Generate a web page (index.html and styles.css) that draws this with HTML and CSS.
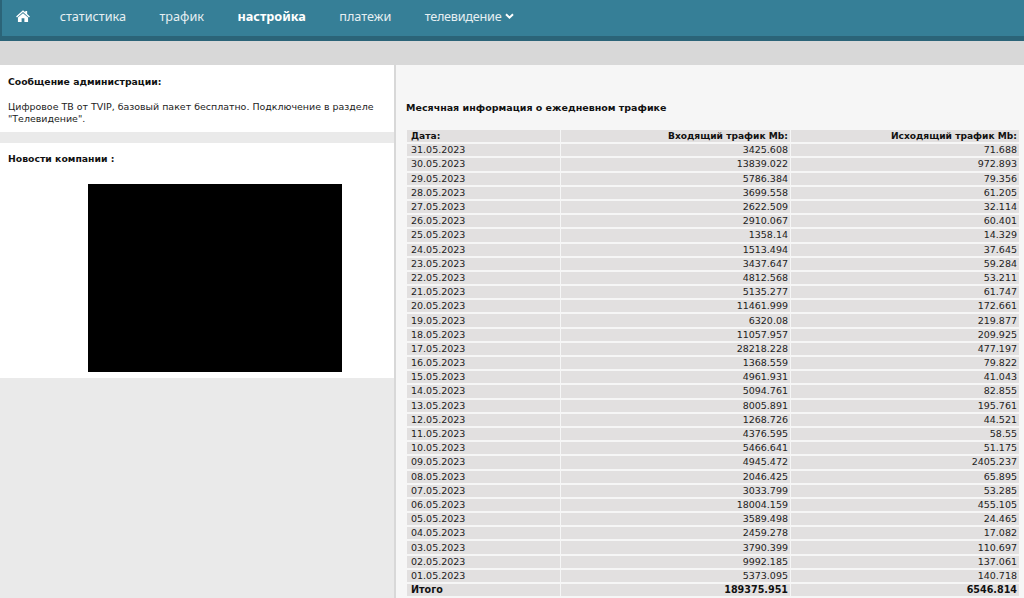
FILE: index.html
```html
<!DOCTYPE html>
<html lang="ru">

<head>
    <meta charset="UTF-8">
    <title>Месячная информация о ежедневном трафике</title>
    <link rel="stylesheet" href="styles.css">
</head>

<body>
    <nav class="topnav">
        <a class="nav-home" href="#">
            <svg width="14" height="12" viewBox="0 0 15 13"><path fill="#fff" d="M7.5 0.2 L10 2.5 V1 H12 V4.3 L15 7 L14 8 L7.5 2.2 L1 8 L0 7 Z M7.5 3.4 L13 8.2 V13 H9 V9 H6 V13 H2 V8.2 Z"/></svg>
        </a>
        <a href="#">статистика</a>
        <a href="#">трафик</a>
        <a class="active" href="#">настройка</a>
        <a href="#">платежи</a>
        <a class="nav-tv" href="#">телевидение <svg class="caret" width="9" height="7" viewBox="0 0 9 7"><path fill="none" stroke="#fff" stroke-width="2" d="M1 1.2 L4.5 4.7 L8 1.2"/></svg></a>
    </nav>
    <div class="subbar"></div>

    <div class="content">
        <aside class="left">
            <section class="block message">
                <h3>Сообщение администрации:</h3>
                <p>Цифровое ТВ от TVIP, базовый пакет бесплатно. Подключение в разделе "Телевидение".</p>
            </section>
            <section class="block news">
                <h3>Новости компании :</h3>
                <div class="news-image"></div>
            </section>
        </aside>

        <main class="right">
            <h3 class="table-title">Месячная информация о ежедневном трафике</h3>
            <table class="traffic">
                <tr class="bold head"><td>Дата:</td><td>Входящий трафик Mb:</td><td>Исходящий трафик Mb:</td></tr>
                <tr><td>31.05.2023</td><td>3425.608</td><td>71.688</td></tr>
                <tr><td>30.05.2023</td><td>13839.022</td><td>972.893</td></tr>
                <tr><td>29.05.2023</td><td>5786.384</td><td>79.356</td></tr>
                <tr><td>28.05.2023</td><td>3699.558</td><td>61.205</td></tr>
                <tr><td>27.05.2023</td><td>2622.509</td><td>32.114</td></tr>
                <tr><td>26.05.2023</td><td>2910.067</td><td>60.401</td></tr>
                <tr><td>25.05.2023</td><td>1358.14</td><td>14.329</td></tr>
                <tr><td>24.05.2023</td><td>1513.494</td><td>37.645</td></tr>
                <tr><td>23.05.2023</td><td>3437.647</td><td>59.284</td></tr>
                <tr><td>22.05.2023</td><td>4812.568</td><td>53.211</td></tr>
                <tr><td>21.05.2023</td><td>5135.277</td><td>61.747</td></tr>
                <tr><td>20.05.2023</td><td>11461.999</td><td>172.661</td></tr>
                <tr><td>19.05.2023</td><td>6320.08</td><td>219.877</td></tr>
                <tr><td>18.05.2023</td><td>11057.957</td><td>209.925</td></tr>
                <tr><td>17.05.2023</td><td>28218.228</td><td>477.197</td></tr>
                <tr><td>16.05.2023</td><td>1368.559</td><td>79.822</td></tr>
                <tr><td>15.05.2023</td><td>4961.931</td><td>41.043</td></tr>
                <tr><td>14.05.2023</td><td>5094.761</td><td>82.855</td></tr>
                <tr><td>13.05.2023</td><td>8005.891</td><td>195.761</td></tr>
                <tr><td>12.05.2023</td><td>1268.726</td><td>44.521</td></tr>
                <tr><td>11.05.2023</td><td>4376.595</td><td>58.55</td></tr>
                <tr><td>10.05.2023</td><td>5466.641</td><td>51.175</td></tr>
                <tr><td>09.05.2023</td><td>4945.472</td><td>2405.237</td></tr>
                <tr><td>08.05.2023</td><td>2046.425</td><td>65.895</td></tr>
                <tr><td>07.05.2023</td><td>3033.799</td><td>53.285</td></tr>
                <tr><td>06.05.2023</td><td>18004.159</td><td>455.105</td></tr>
                <tr><td>05.05.2023</td><td>3589.498</td><td>24.465</td></tr>
                <tr><td>04.05.2023</td><td>2459.278</td><td>17.082</td></tr>
                <tr><td>03.05.2023</td><td>3790.399</td><td>110.697</td></tr>
                <tr><td>02.05.2023</td><td>9992.185</td><td>137.061</td></tr>
                <tr><td>01.05.2023</td><td>5373.095</td><td>140.718</td></tr>
                <tr class="bold"><td>Итого</td><td>189375.951</td><td>6546.814</td></tr>
            </table>
        </main>
    </div>
</body>

</html>
```

FILE: styles.css
```css
body {
    margin: 0;
    height: 598px;
    overflow: hidden;
    background-color: #eaeaea;
    font-family: "DejaVu Sans", Verdana, sans-serif;
    font-size: 9.45px;
    color: #222;
}

.topnav {
    display: flex;
    align-items: center;
    height: 32px;
    padding: 0 0 4px 14px;
    gap: 33.3px;
    background-color: #367f97;
    border-left: 2px solid #2b6478;
    border-bottom: 5px solid #2b6478;
    font-family: "Noto Sans", sans-serif;
    font-size: 12.7px;
}

.topnav a {
    color: #e6eff2;
    text-decoration: none;
}

.topnav .active {
    color: #fff;
    font-weight: bold;
}

.nav-home {
    display: flex;
    margin-right: -3.6px;
}

.nav-tv {
    letter-spacing: -0.25px;
}

.caret {
    vertical-align: 1px;
}

.subbar {
    height: 24px;
    background-color: #d8d8d8;
}

.content {
    display: flex;
    height: 557px;
}

.left {
    width: 394px;
    flex: none;
}

.block {
    background-color: #fff;
    padding: 10px 8px 0;
}

.block h3 {
    margin: 0;
    font-size: 9.3px;
    line-height: 13px;
    color: #111;
}

.message {
    height: 57px;
    margin-bottom: 11px;
}

.message p {
    margin: 13px 0 0;
    line-height: 12px;
}

.news {
    height: 226px;
    padding-top: 9px;
}

.news-image {
    width: 254px;
    height: 188px;
    margin: 19px 0 0 80px;
    background-color: #000;
}

.right {
    flex: 1;
    border-left: 2px solid #d8d8d8;
    background-color: #f6f6f6;
    padding: 36px 5px 0 10px;
}

.table-title {
    margin: 0 0 14px;
    font-size: 9.5px;
    line-height: 13px;
    color: #111;
}

.traffic {
    width: 614px;
    border-collapse: separate;
    border-spacing: 1px 2px;
    font-size: 9.5px;
}

.traffic td {
    height: 12.2px;
    padding: 0 2px 0 4px;
    background-color: #e2e0e0;
    line-height: 12px;
    text-align: right;
    white-space: nowrap;
}

.traffic td:first-child {
    width: 147px;
    text-align: left;
}

.traffic td:nth-child(2) {
    width: 223px;
}

.bold td {
    font-weight: bold;
    color: #111;
    font-size: 9.6px;
}

.head td {
    font-size: 9.1px;
}
```
